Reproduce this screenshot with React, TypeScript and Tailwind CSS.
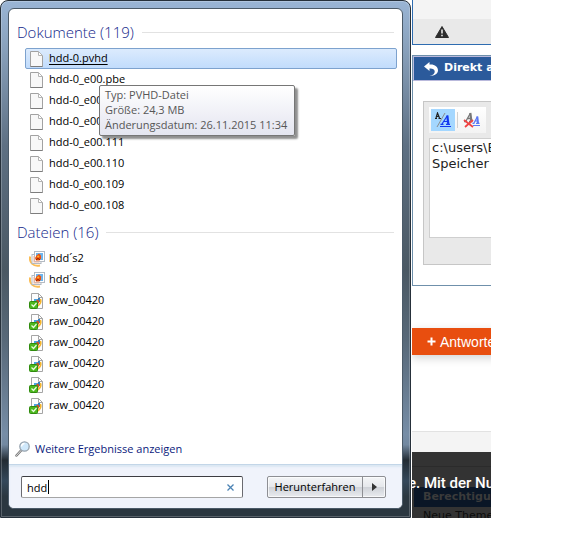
import { useState } from 'react'

type IconKind = 'file' | 'gallery' | 'checked'

type ResultItem = {
  label: string
  icon: IconKind
  active?: boolean
}

const dokumente: ResultItem[] = [
  { label: 'hdd-0.pvhd', icon: 'file', active: true },
  { label: 'hdd-0_e00.pbe', icon: 'file' },
  { label: 'hdd-0_e00.114', icon: 'file' },
  { label: 'hdd-0_e00.112', icon: 'file' },
  { label: 'hdd-0_e00.111', icon: 'file' },
  { label: 'hdd-0_e00.110', icon: 'file' },
  { label: 'hdd-0_e00.109', icon: 'file' },
  { label: 'hdd-0_e00.108', icon: 'file' },
]

const dateien: ResultItem[] = [
  { label: 'hdd´s2', icon: 'gallery' },
  { label: 'hdd´s', icon: 'gallery' },
  { label: 'raw_00420', icon: 'checked' },
  { label: 'raw_00420', icon: 'checked' },
  { label: 'raw_00420', icon: 'checked' },
  { label: 'raw_00420', icon: 'checked' },
  { label: 'raw_00420', icon: 'checked' },
  { label: 'raw_00420', icon: 'checked' },
]

function FileIcon() {
  return (
    <svg width="16" height="16" viewBox="0 0 16 16" aria-hidden="true">
      <path d="M1.5 .5h8l4 4v11h-12z" fill="#f8f8f8" stroke="#a2a2a2" />
      <path d="M1.5 15.5h12" stroke="#7d7d7d" />
      <path d="M9.5 .5v4h4z" fill="#fff" stroke="#b4b4b4" />
    </svg>
  )
}

function GalleryIcon() {
  return (
    <svg width="16" height="16" viewBox="0 0 16 16" aria-hidden="true">
      <path d="M1.2 5.500C-.2 11 4 16 11 14.500" fill="none" stroke="#fbbd55" strokeWidth="2" />
      <rect x="3" y="3.500" width="9" height="9" fill="#fff" stroke="#b4bac2" />
      <rect x="5.500" y=".5" width="10" height="10" fill="#fff" stroke="#b4bac2" />
      <rect x="7" y="2" width="7" height="7" fill="#6db5ee" />
      <path d="M4.500 5h1v5.500h5v1h-6z" fill="#f0b49c" />
      <path d="M10 2.500l2 2v3l-1.500 2H7L6 7l1.500-2.500z" fill="#f0520c" />
      <circle cx="9.200" cy="5.500" r="1.100" fill="#ffb52e" />
      <path d="M7 8.700l2-1.200 2 1.200" fill="none" stroke="#8c2204" />
    </svg>
  )
}

function CheckedIcon() {
  return (
    <svg width="16" height="16" viewBox="0 0 16 16" aria-hidden="true">
      <path d="M2.500 .5h7l4 4v11h-11z" fill="#fdfdfd" stroke="#a5a5a5" />
      <path d="M9.500 .5v4h4z" fill="#fff" stroke="#a5a5a5" />
      <rect x="5" y="6" width="5" height="3" fill="#4aa3e2" />
      <path d="M9 5h2v4H9z" fill="#2d7fc4" />
      <path d="M7 7.500l2-1 1.500 2-1 2.500z" fill="#d8521f" />
      <path d="M11.500 6c1 3-.5 5.500-3 7" fill="none" stroke="#f5b52c" strokeWidth="1.600" />
      <rect x=".5" y="8.500" width="8" height="7" rx="1" fill="#4db81d" stroke="#2f8a0d" />
      <path d="M2.500 11.500l2 2 3-3.500" fill="none" stroke="#e9fbe0" strokeWidth="1.200" />
    </svg>
  )
}

function ResultIcon({ kind }: { kind: IconKind }) {
  if (kind === 'gallery') return <GalleryIcon />
  if (kind === 'checked') return <CheckedIcon />
  return <FileIcon />
}

function ResultGroup({ title, items }: { title: string; items: ResultItem[] }) {
  return (
    <section>
      <div className="flex items-center gap-2 h-8 pl-2 pr-2">
        <h2 className="text-[15px] leading-5 font-light text-[#14288a] whitespace-nowrap">{title}</h2>
        <div className="flex-1 h-px bg-[#e2e2e2]" />
      </div>
      <ul className="pl-4 pr-[5px]">
        {items.map((item, index) => (
          <li key={index}>
            <a
              href="#"
              className={
                item.active
                  ? 'flex items-center gap-1 h-[21px] pl-[3px] rounded-xs border border-[#7da2ce] bg-linear-to-b from-[#dcebfd] to-[#c1dcfc] underline underline-offset-2'
                  : 'flex items-center gap-1 h-[21px] pl-[3px] rounded-xs border border-transparent'
              }
            >
              <ResultIcon kind={item.icon} />
              {item.label}
            </a>
          </li>
        ))}
      </ul>
    </section>
  )
}

function StartMenu() {
  const [search, setSearch] = useState('hdd')

  return (
    <div className="w-[411px] shrink-0 rounded-t-lg border border-[#26303a] p-[7px] bg-[linear-gradient(180deg,#9ab5d5_0%,#8ba4bf_8%,#5e7083_28%,#4a5863_52%,#586979_66%,#768da6_84%,#7288a0_86%,#222b33_89%,#34485a_93%,#2b3740_96%,#2b3740_100%)] shadow-[inset_0_0_0_1px_#ffffff38]">
      <main className="relative rounded-md border border-[#4b5a68] bg-white overflow-hidden">
        <div className="pt-[7px]">
          <ResultGroup title="Dokumente (119)" items={dokumente} />
          <ResultGroup title="Dateien (16)" items={dateien} />
        </div>

        <a href="#" className="flex items-center gap-1 mt-[21px] mb-[3px] h-6 pl-[6px] text-[#0b1a7c]">
          <svg width="16" height="16" viewBox="0 0 16 16" aria-hidden="true">
            <path d="M1.500 14.500l5-5.500" stroke="#777" strokeWidth="2.500" strokeLinecap="round" />
            <path d="M1.500 14.500l5-5.500" stroke="#ddd" strokeLinecap="round" />
            <circle cx="9.500" cy="5.500" r="4.700" fill="#cfe8fb" stroke="#97a3ae" strokeWidth="1.300" />
            <path d="M6.500 5.500a3 3 0 0 1 3-3" fill="none" stroke="#fff" strokeWidth="1.500" />
          </svg>
          Weitere Ergebnisse anzeigen
        </a>

        <div className="flex items-center justify-between border-t border-[#c3d6e8] bg-[#f0f3fb] pt-[11px] pb-[10px] pl-3 pr-4 shadow-[inset_0_2px_2px_#dbe7f3]">
          <div className="relative w-[222px]">
            <input
              type="text"
              aria-label="Programme/Dateien durchsuchen"
              value={search}
              onChange={(e) => setSearch(e.target.value)}
              className="block w-full h-[22px] pl-[5px] pr-6 bg-white border border-[#a5a5a5] border-t-[#3d3d42] border-l-[#6a6a70] border-r-[#6a6a70] rounded-xs outline-none"
            />
            <span className="absolute left-[27px] top-1 w-px h-[14px] bg-black" />
            <button aria-label="Suche löschen" onClick={() => setSearch('')} className="absolute right-2 top-[7px]">
              <svg width="9" height="9" viewBox="0 0 9 9">
                <path d="M1.500 1.500l6 6M7.500 1.500l-6 6" stroke="#4c83b4" strokeWidth="1.300" />
              </svg>
            </button>
          </div>
          <div className="flex h-[22px] rounded-xs border border-[#8e8f94] bg-[linear-gradient(180deg,#f4f5f7_0%,#e6e8ec_48%,#cfd2d8_52%,#e9ebef_100%)] shadow-[inset_0_0_0_1px_#ffffffb0]">
            <button className="w-[95px] border-r border-[#8e8f94]">Herunterfahren</button>
            <button aria-label="Weitere Optionen" className="flex w-[22px] items-center justify-center">
              <svg width="5" height="8" viewBox="0 0 5 8">
                <path d="M0 0l5 4-5 4z" fill="#333" />
              </svg>
            </button>
          </div>
        </div>

        <div
          role="tooltip"
          className="absolute left-[90px] top-[76px] w-[196px] rounded-xs border border-[#767676] bg-linear-to-b from-white to-[#e4e5f0] px-[5px] pt-px pb-[3px] leading-[15px] text-[#575757] whitespace-nowrap shadow-[3px_3px_2px_#00000070]"
        >
          <p>Typ: PVHD-Datei</p>
          <p>Größe: 24,3 MB</p>
          <p>Änderungsdatum: 26.11.2015 11:34</p>
        </div>
      </main>
    </div>
  )
}

function ForumPage() {
  const [message, setMessage] = useState('c:\\users\\Benutzer\nSpeicher der Datei')

  return (
    <div className="flex-1 min-w-0 ml-px overflow-hidden font-['DejaVu_Sans',sans-serif]">
      <div className="min-w-96">
        <div className="border-l border-b border-[#2e6cb0] bg-[#f4f4f4] pt-[19px]">
          <div className="flex items-center h-[25px] pl-[22px] bg-[#e9e9e9]">
            <svg width="14" height="12" viewBox="0 0 14 12" aria-hidden="true">
              <path d="M7 .5L13.500 11.500H.5z" fill="#2d2d2d" stroke="#2d2d2d" strokeLinejoin="round" />
              <path d="M7 3.500v4" stroke="#e9e9e9" strokeWidth="1.600" />
              <path d="M7 8.700v1.500" stroke="#e9e9e9" strokeWidth="1.600" />
            </svg>
          </div>
        </div>

        <div className="mt-[10px] border border-[#6f90ab]">
          <div className="flex items-center gap-[6px] h-[25px] pl-[10px] border border-[#b9b9dc] bg-[#2b5a9b] text-white">
            <svg width="14" height="14" viewBox="0 0 14 14" aria-hidden="true">
              <path d="M0 4.500L5.500 0v2.500C10.500 2 14 4.500 14 8.500c0 3-3 5.300-8.500 5.500C9 13 11 11.500 10.700 9.200 10.400 7 8.500 6.300 5.500 6.500V9z" fill="#fff" />
            </svg>
            <h3 className="text-[11px] font-bold">Direkt antworten</h3>
          </div>

          <div className="mt-5 mb-5 ml-[10px] border border-[#c6c6c6] bg-[#e9e9e9] pt-[5px] pl-[5px] pb-[26px]">
            <div className="flex w-[57px] items-center h-[26px] pl-[2px] gap-[2px] bg-linear-to-b from-white to-[#f3f3f3]">
              <button aria-label="Editor umschalten" className="w-6 h-[22px] bg-[#a4d7ff] flex items-center justify-center">
                <svg width="18" height="16" viewBox="0 0 18 16" fill="none" aria-hidden="true">
                  <path d="M1 6.500h2M4.500 6.500h2.500M2 6l1.500-5 2 5M2.800 4.500h2" stroke="#222" strokeWidth="1.200" />
                  <path d="M11 1L3 15" stroke="#8b8b8b" />
                  <path d="M6.500 12.300h3M12 12.300h4M8 12l5.500-8.500M9.800 9.500h4" stroke="#1238f0" strokeWidth="1.200" />
                  <path d="M13.300 3.500l1 8.500" stroke="#1238f0" strokeWidth="2.200" />
                  <path d="M6 14.500h11" stroke="#1238f0" />
                </svg>
              </button>
              <span className="w-px h-4 bg-[#d0d0d0]" />
              <button aria-label="Formatierung entfernen" className="w-6 h-[22px] flex items-center justify-center">
                <svg width="18" height="18" viewBox="0 0 18 18" fill="none" aria-hidden="true">
                  <path d="M1 10.500h3M6 10.500h3.500M3 10l4.500-8M4.500 7.500h4" stroke="#777" strokeWidth="1.300" />
                  <path d="M7.300 2l1 8" stroke="#777" strokeWidth="2.200" />
                  <path d="M9.500 12.300h2M13 12.300h3.500M11 12l3.500-6.500M12 10h3" stroke="#5b78f5" strokeWidth="1.200" />
                  <path d="M14.300 5.500l.7 6.500" stroke="#5b78f5" strokeWidth="2" />
                  <path d="M10 14.500h7" stroke="#5b78f5" />
                  <path d="M1 9l9 7M10 9l-8 7" stroke="#f04444" strokeWidth="1.800" />
                </svg>
              </button>
            </div>
            <textarea
              aria-label="Nachricht"
              value={message}
              onChange={(e) => setMessage(e.target.value)}
              className="block w-full h-[100px] mt-[5px] px-[2px] py-px resize-none border border-[#cfcfcf] bg-white text-[13px] leading-4 text-[#222] outline-none"
            />
          </div>
        </div>

        <button className="flex items-center gap-1 mt-[42px] h-[27px] w-full pl-[15px] bg-[#e84e0f] text-white text-sm font-['Liberation_Sans',sans-serif] shadow-[0_3px_10px_#0000002e]">
          <svg width="9" height="9" viewBox="0 0 9 9" aria-hidden="true">
            <path d="M4.500 .5v8M.5 4.500h8" stroke="#fff" strokeWidth="2" />
          </svg>
          Antworten
        </button>

        <div className="mt-[76px] h-[21px] border-t border-[#e2e2e2] bg-[#f4f4f4]" />

        <div className="bg-[#333]">
          <div className="h-[15px] border-b border-[#2b2b2b]" />
          <p className="relative -ml-1 h-5 leading-8 text-[15px] font-medium text-white font-['Roboto',sans-serif]">e. Mit der Nutzung</p>
          <h3 className="h-5 ml-[2px] pl-[9px] leading-5 bg-[#0a1626] text-[11px] font-bold text-[#3b3b3b]">Berechtigungen</h3>
          <p className="h-[11px] pl-[11px] pt-[3px] overflow-hidden leading-3 text-[11px] text-[#0c0c0c]">Neue Themen</p>
        </div>
      </div>
    </div>
  )
}

export default function App() {
  return (
    <div className="flex pr-[72px] pb-9 bg-white text-[11px] text-black font-['Open_Sans',sans-serif]">
      <StartMenu />
      <ForumPage />
    </div>
  )
}
